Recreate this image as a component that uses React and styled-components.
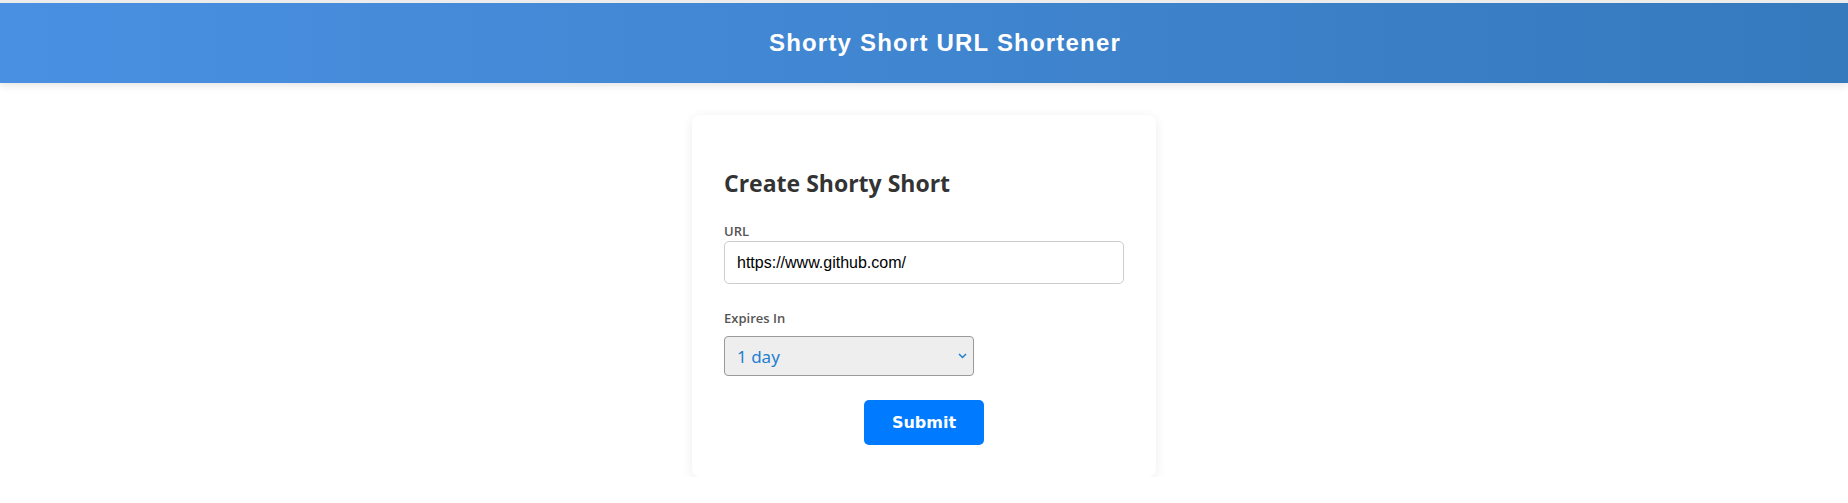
import React, { useState } from 'react'
import styled, { createGlobalStyle } from 'styled-components'

const GlobalStyle = createGlobalStyle`
  html, body {
    margin: 0;
    padding: 0;
    background: #fff;
  }
  body {
    font-family: "Open Sans", "Noto Sans", sans-serif;
  }
`

const Header = styled.header`
  height: 80px;
  padding-left: 42px;
  border-top: 3px solid #ececec;
  display: flex;
  align-items: center;
  justify-content: center;
  background: linear-gradient(90deg, #4a90e2 0%, #357abd 100%);
  box-shadow: 0 2px 8px rgba(0, 0, 0, 0.12);
`

const Title = styled.h1`
  margin: 0;
  color: #fff;
  font-family: "Liberation Sans", Arial, sans-serif;
  font-size: 24px;
  font-weight: 700;
  letter-spacing: 1.2px;
`

const Main = styled.main`
  display: flex;
  justify-content: center;
  padding-top: 32px;
`

const Card = styled.form`
  width: 464px;
  box-sizing: border-box;
  padding: 32px;
  background: #fff;
  border-radius: 8px;
  box-shadow: 0 2px 12px rgba(0, 0, 0, 0.08);
  display: flex;
  flex-direction: column;
`

const Heading = styled.h2`
  margin: 20px 0 23px;
  color: #333;
  font-family: "Open Sans", sans-serif;
  font-size: 23px;
  font-weight: 700;
`

const Field = styled.div`
  display: flex;
  flex-direction: column;
  margin-bottom: ${({ $gap }) => $gap}px;
`

const Label = styled.label`
  color: #555;
  font-family: "Open Sans", sans-serif;
  font-size: 13px;
  font-weight: 600;
  margin-bottom: 1px;
`

const TextInput = styled.input`
  box-sizing: border-box;
  width: 100%;
  height: 43px;
  padding: 0 12px;
  border: 1px solid #ccc;
  border-radius: 5px;
  font-family: "Liberation Sans", Arial, sans-serif;
  font-size: 16px;
  color: #000;
  outline: none;
`

const SelectWrap = styled.div`
  position: relative;
  width: 250px;
  margin-top: 8px;
`

const Select = styled.select`
  appearance: none;
  box-sizing: border-box;
  width: 100%;
  height: 40px;
  padding: 0 12px;
  background: #eee;
  border: 1px solid #999;
  border-radius: 4px;
  color: #1f7fcf;
  font-family: "Noto Sans", sans-serif;
  font-size: 17px;
  outline: none;
`

const Chevron = styled.svg`
  position: absolute;
  right: 7px;
  top: 17px;
  pointer-events: none;
`

const SubmitButton = styled.button`
  align-self: center;
  width: 120px;
  height: 45px;
  border: none;
  border-radius: 5px;
  background: #007bff;
  color: #fff;
  font-family: "DejaVu Sans", Verdana, sans-serif;
  font-size: 16px;
  font-weight: 700;
  cursor: pointer;
`

export default function App() {
  const [url, setUrl] = useState('https://www.github.com/')
  const [expires, setExpires] = useState('1d')

  return (
    <>
      <GlobalStyle />
      <Header>
        <Title>Shorty Short URL Shortener</Title>
      </Header>
      <Main>
        <Card onSubmit={e => e.preventDefault()}>
          <Heading>Create Shorty Short</Heading>
          <Field $gap={25}>
            <Label htmlFor="url">URL</Label>
            <TextInput id="url" value={url} onChange={e => setUrl(e.target.value)} />
          </Field>
          <Field $gap={24}>
            <Label htmlFor="expires">Expires In</Label>
            <SelectWrap>
              <Select id="expires" value={expires} onChange={e => setExpires(e.target.value)}>
                <option value="1d">1 day</option>
                <option value="7d">7 days</option>
                <option value="30d">30 days</option>
              </Select>
              <Chevron width="9" height="6" viewBox="0 0 9 6">
                <path d="M1 1l3.5 3.5L8 1" fill="none" stroke="#1f7fcf" strokeWidth="1.5" />
              </Chevron>
            </SelectWrap>
          </Field>
          <SubmitButton type="submit">Submit</SubmitButton>
        </Card>
      </Main>
    </>
  )
}
